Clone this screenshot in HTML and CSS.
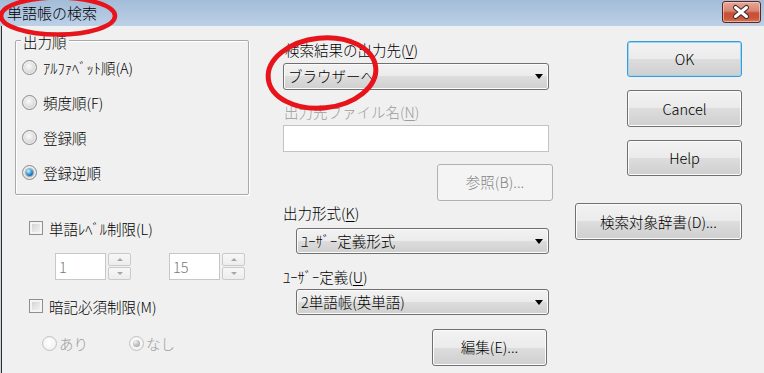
FILE: index.html
```html
<!DOCTYPE html>
<html lang="ja">
<head>
<meta charset="utf-8">
<title>単語帳の検索</title>
<link rel="stylesheet" href="styles.css">
</head>
<body>
<div class="window">
  <div class="titlebar">
    <span class="title">単語帳の検索</span>
    <div class="close">
      <svg width="37" height="20" viewBox="0 0 37 20">
        <g stroke-linecap="round">
          <path d="M12.5 5.5 L23.5 14.5 M23.5 5.5 L12.5 14.5" stroke="#3b2a2a" stroke-width="5"/>
          <path d="M12.5 5.5 L23.5 14.5 M23.5 5.5 L12.5 14.5" stroke="#ffffff" stroke-width="3"/>
        </g>
      </svg>
    </div>
  </div>
  <div class="content">
    <div class="col-left">
      <div class="group">
        <div class="group-title">出力順</div>
        <div class="radio-row"><span class="radio"></span><span>ｱﾙﾌｧﾍﾞｯﾄ順(A)</span></div>
        <div class="radio-row"><span class="radio"></span><span>頻度順(F)</span></div>
        <div class="radio-row"><span class="radio"></span><span>登録順</span></div>
        <div class="radio-row"><span class="radio checked"></span><span>登録逆順</span></div>
      </div>
      <div class="check-row level"><span class="check"></span><span>単語ﾚﾍﾞﾙ制限(L)</span></div>
      <div class="spin-row">
        <div class="spin">
          <div class="spin-input">1</div>
          <div class="spin-btns"><span class="spin-btn"><span class="tri-up"></span></span><span class="spin-btn"><span class="tri-down"></span></span></div>
        </div>
        <div class="spin second">
          <div class="spin-input">15</div>
          <div class="spin-btns"><span class="spin-btn"><span class="tri-up"></span></span><span class="spin-btn"><span class="tri-down"></span></span></div>
        </div>
      </div>
      <div class="check-row memo"><span class="check"></span><span>暗記必須制限(M)</span></div>
      <div class="opt-row">
        <div class="opt first"><span class="radio disabled"></span><span class="dim">あり</span></div>
        <div class="opt"><span class="radio disabled checked"></span><span class="dim">なし</span></div>
      </div>
    </div>

    <div class="col-mid">
      <div class="lbl lbl-dest">検索結果の出力先(<u>V</u>)</div>
      <div class="combo combo-dest"><span class="combo-text">ブラウザーへ</span><span class="arrow"></span></div>
      <div class="lbl lbl-file dim">出力先ファイル名(<u>N</u>)</div>
      <div class="textbox"></div>
      <div class="btn btn-ref disabled">参照(B)...</div>
      <div class="lbl lbl-fmt">出力形式(<u>K</u>)</div>
      <div class="combo combo-fmt"><span class="combo-text">ﾕｰｻﾞｰ定義形式</span><span class="arrow"></span></div>
      <div class="lbl lbl-user">ﾕｰｻﾞｰ定義(<u>U</u>)</div>
      <div class="combo combo-user"><span class="combo-text">2単語帳(英単語)</span><span class="arrow"></span></div>
      <div class="btn btn-edit">編集(E)...</div>
    </div>

    <div class="col-right">
      <div class="btn btn-ok">OK</div>
      <div class="btn btn-cancel">Cancel</div>
      <div class="btn btn-help">Help</div>
      <div class="btn btn-dict">検索対象辞書(D)...</div>
    </div>
  </div>

  <svg class="marks" width="764" height="373" viewBox="0 0 764 373">
    <ellipse cx="58" cy="16" rx="57" ry="18.5" fill="none" stroke="#e8141c" stroke-width="4.5"/>
    <ellipse cx="322" cy="73" rx="54" ry="35" fill="none" stroke="#e8141c" stroke-width="5" transform="rotate(-6 322 73)"/>
  </svg>
</div>
</body>
</html>
```

FILE: styles.css
```css
* { box-sizing: border-box; }

html, body {
  margin: 0;
  padding: 0;
  background: #f0f0f0;
}

body {
  font-family: "Noto Sans CJK JP", "Liberation Sans", sans-serif;
  font-weight: 300;
  font-size: 14.5px;
  color: #000;
}

.window {
  position: relative;
  width: 764px;
  height: 373px;
  overflow: hidden;
  background: #f0f0f0;
}

/* ---------- title bar ---------- */
.titlebar {
  height: 26px;
  display: flex;
  justify-content: space-between;
  align-items: flex-start;
  background: linear-gradient(to bottom, #a3bcd8 0%, #b2c8e1 60%, #bcd1e8 100%);
}

.title {
  font-size: 15px;
  line-height: 25px;
  padding-left: 7px;
  color: #000;
}

.close {
  width: 39px;
  height: 22px;
  margin-top: 1px;
  margin-right: 3px;
  border: 1px solid #5e2620;
  border-radius: 3px;
  background: linear-gradient(to bottom, #e8a898 0%, #d88470 45%, #c65038 55%, #c8553a 80%, #d47a5a 100%);
  box-shadow: inset 0 0 0 1px rgba(255, 220, 210, 0.55);
  display: flex;
  align-items: center;
  justify-content: center;
}

.close svg { display: block; }

/* ---------- content ---------- */
.content {
  height: 347px;
  display: flex;
  padding-left: 15px;
  box-shadow: inset 1px 0 0 #c9d3de, inset 2px 0 0 #2e2e2e;
}

.col-left {
  width: 234px;
  display: flex;
  flex-direction: column;
}

.group {
  margin-top: 14px;
  height: 155px;
  border: 1px solid #a9a9a9;
  border-radius: 2px;
  box-shadow: inset 1px 1px 0 #ffffff, 1px 1px 0 #ffffff;
}

.group-title {
  width: fit-content;
  margin: -8px 0 0 5px;
  padding: 0 2px;
  background: #f0f0f0;
  line-height: 17px;
}

.radio-row {
  height: 35px;
  display: flex;
  align-items: center;
  padding-left: 6px;
}

.radio {
  position: relative;
  flex: none;
  width: 15px;
  height: 15px;
  margin-right: 6px;
  border-radius: 50%;
  border: 1px solid #8a8a8a;
  background: radial-gradient(circle at 45% 40%, #fafafa 0%, #e4e4e4 40%, #c4c4c4 100%);
  box-shadow: inset 0 0 0 1px #f2f2f2;
}

.radio.checked::after {
  content: "";
  position: absolute;
  left: 3px;
  top: 3px;
  width: 7px;
  height: 7px;
  border-radius: 50%;
  background: radial-gradient(circle at 35% 30%, #d6f4ff 0%, #52b4ec 35%, #1b6cb0 70%, #0c3f78 100%);
  box-shadow: 0 0 0 1px rgba(20, 70, 120, 0.35);
}

.radio.disabled {
  border-color: #c2c2c2;
  background: radial-gradient(circle at 45% 40%, #ffffff 0%, #f4f4f4 60%, #e4e4e4 100%);
}

.radio.disabled.checked::after {
  background: radial-gradient(circle at 35% 30%, #f2f2f2 0%, #c4c4c4 45%, #9a9a9a 100%);
  box-shadow: none;
}

.check-row {
  height: 20px;
  display: flex;
  align-items: center;
  padding-left: 14px;
}

.check-row.level { margin-top: 23px; }
.check-row.memo { margin-top: 16px; }

.check {
  flex: none;
  width: 14px;
  height: 14px;
  margin-right: 6px;
  border: 1px solid #8e8f8f;
  background: linear-gradient(135deg, #c8ccd2 0%, #e2e4e6 50%, #f7f7f7 100%);
  box-shadow: inset 0 0 0 2px #f4f4f4;
}

.spin-row {
  margin-top: 15px;
  height: 27px;
  display: flex;
  padding-left: 40px;
}

.spin {
  display: flex;
  gap: 2px;
}

.spin.second { margin-left: 38px; }

.spin-input {
  width: 51px;
  height: 27px;
  border: 1px solid #c7c7c7;
  background: #ffffff;
  color: #7a7a7a;
  padding-left: 3px;
  line-height: 25px;
}

.spin-btns {
  width: 23px;
  height: 27px;
  display: flex;
  flex-direction: column;
  gap: 1px;
}

.spin-btn {
  flex: 1;
  border: 1px solid #cacaca;
  border-radius: 2px;
  background: linear-gradient(to bottom, #f7f7f7, #ededed);
  display: flex;
  align-items: center;
  justify-content: center;
}

.tri-up, .tri-down {
  width: 0;
  height: 0;
  border-left: 3.5px solid transparent;
  border-right: 3.5px solid transparent;
}

.tri-up { border-bottom: 3px solid #a6a6a6; }
.tri-down { border-top: 3px solid #a6a6a6; }

.opt-row {
  margin-top: 17px;
  height: 20px;
  display: flex;
  padding-left: 27px;
}

.opt {
  display: flex;
  align-items: center;
}

.opt .radio { margin-right: 2px; }
.opt.first { width: 87px; }

.dim { color: #9d9d9d; }

/* ---------- middle column ---------- */
.col-mid {
  width: 270px;
  margin-left: 34px;
  display: flex;
  flex-direction: column;
}

.lbl {
  line-height: 17px;
  padding-left: 2px;
}

.lbl u { text-underline-offset: 2px; }

.lbl-dest { margin-top: 14.5px; }
.lbl-file { margin-top: 13px; padding-left: 1px; }
.lbl-fmt { margin-top: 3px; padding-left: 0; }
.lbl-user { margin-top: 14px; padding-left: 0; }

.combo {
  height: 26px;
  display: flex;
  align-items: center;
  justify-content: space-between;
  border: 1px solid #707070;
  border-radius: 3px;
  background: linear-gradient(to bottom, #f2f2f2 0%, #ebebeb 50%, #dddddd 50%, #cfcfcf 100%);
  box-shadow: inset 0 0 0 1px #fbfbfb;
  padding: 0 5px 0 4px;
}

.combo-text { line-height: 20px; }

.arrow {
  width: 0;
  height: 0;
  border-left: 4.5px solid transparent;
  border-right: 4.5px solid transparent;
  border-top: 5px solid #000;
  margin-top: 1px;
}

.combo-dest { margin-top: 5px; width: 266px; height: 27px; }
.combo-fmt { margin-top: 7px; width: 253px; margin-left: 13px; }
.combo-user { margin-top: 4px; width: 253px; margin-left: 13px; }

.textbox {
  margin-top: 5px;
  width: 266px;
  height: 27px;
  border: 1px solid #c3c3c3;
  background: #ffffff;
}

.btn {
  height: 37px;
  display: flex;
  align-items: center;
  justify-content: center;
  border: 1px solid #707070;
  border-radius: 3px;
  background: linear-gradient(to bottom, #f2f2f2 0%, #ebebeb 50%, #dddddd 50%, #cfcfcf 100%);
  box-shadow: inset 0 0 0 1px #fcfcfc;
  line-height: 20px;
}

.btn.disabled {
  border-color: #adb2b5;
  background: #f4f4f4;
  box-shadow: none;
  color: #838383;
}

.btn-ref {
  margin-top: 12px;
  width: 116px;
  align-self: flex-end;
}

.btn-edit {
  margin-top: 14px;
  width: 115px;
  margin-left: 149px;
}

/* ---------- right column ---------- */
.col-right {
  width: 167px;
  margin-left: 22px;
  display: flex;
  flex-direction: column;
  align-items: flex-end;
}

.btn-ok {
  margin-top: 15px;
  width: 115px;
  height: 36px;
  border-color: #3c9ad8;
  box-shadow: inset 0 0 0 1px #98d8f6;
}

.btn-cancel { margin-top: 13px; width: 115px; }
.btn-help { margin-top: 13px; width: 115px; height: 36px; }
.btn-dict { margin-top: 27px; width: 167px; }

/* ---------- annotation marks ---------- */
.marks {
  position: absolute;
  left: 0;
  top: 0;
  pointer-events: none;
}
```
